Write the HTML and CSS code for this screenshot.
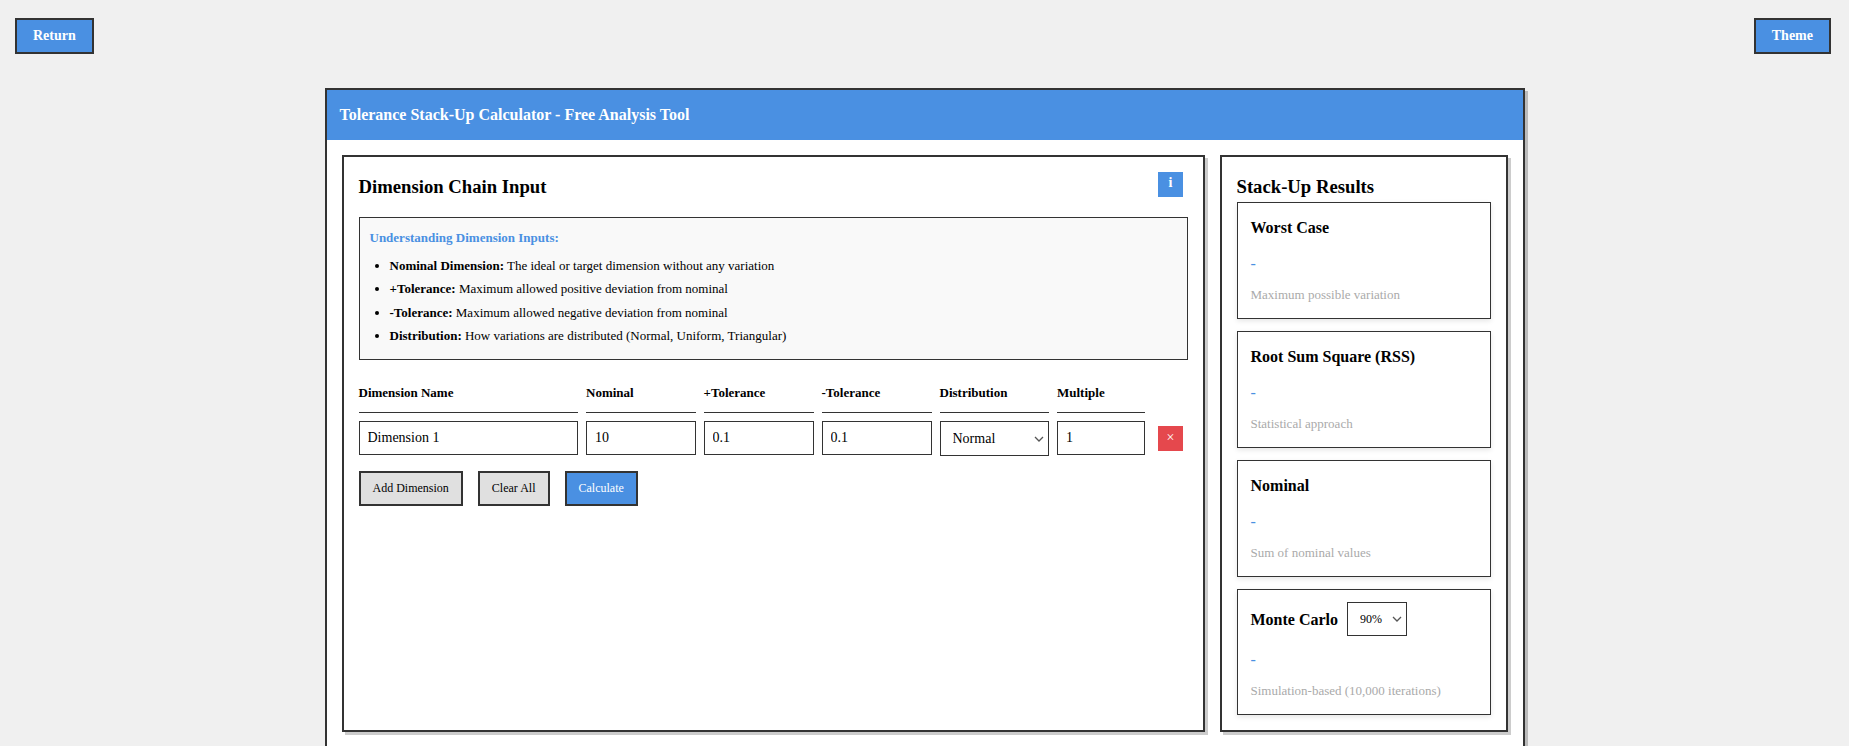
FILE: index.html
```html
<!DOCTYPE html>
<html lang="en">
<head>
<meta charset="utf-8">
<title>Tolerance Stack-Up Calculator</title>
<link rel="stylesheet" href="styles.css">
</head>
<body>
<div class="topbar">
  <button class="btn-top">Return</button>
  <button class="btn-top">Theme</button>
</div>
<main class="card">
  <header class="card-head"><h1>Tolerance Stack-Up Calculator - Free Analysis Tool</h1></header>
  <div class="card-body">
    <section class="panel">
      <div class="panel-head">
        <h2>Dimension Chain Input</h2>
        <button class="info-btn">i</button>
      </div>
      <div class="info-box">
        <h4>Understanding Dimension Inputs:</h4>
        <ul>
          <li><strong>Nominal Dimension:</strong> The ideal or target dimension without any variation</li>
          <li><strong>+Tolerance:</strong> Maximum allowed positive deviation from nominal</li>
          <li><strong>-Tolerance:</strong> Maximum allowed negative deviation from nominal</li>
          <li><strong>Distribution:</strong> How variations are distributed (Normal, Uniform, Triangular)</li>
        </ul>
      </div>
      <div class="dim-grid">
        <div class="th">Dimension Name</div>
        <div class="th">Nominal</div>
        <div class="th">+Tolerance</div>
        <div class="th">-Tolerance</div>
        <div class="th">Distribution</div>
        <div class="th">Multiple</div>
        <div class="th-empty"></div>
        <input class="field" type="text" value="Dimension 1">
        <input class="field" type="text" value="10">
        <input class="field" type="text" value="0.1">
        <input class="field" type="text" value="0.1">
        <select class="field-select"><option>Normal</option><option>Uniform</option><option>Triangular</option></select>
        <input class="field" type="text" value="1">
        <button class="del-btn">×</button>
      </div>
      <div class="actions">
        <button class="btn">Add Dimension</button>
        <button class="btn">Clear All</button>
        <button class="btn btn-primary">Calculate</button>
      </div>
    </section>
    <aside class="panel">
      <h2>Stack-Up Results</h2>
      <div class="results">
        <div class="result">
          <h3>Worst Case</h3>
          <div class="value">-</div>
          <div class="desc">Maximum possible variation</div>
        </div>
        <div class="result">
          <h3>Root Sum Square (RSS)</h3>
          <div class="value">-</div>
          <div class="desc">Statistical approach</div>
        </div>
        <div class="result">
          <h3>Nominal</h3>
          <div class="value">-</div>
          <div class="desc">Sum of nominal values</div>
        </div>
        <div class="result">
          <div class="mc-row">
            <h3>Monte Carlo</h3>
            <select class="mc-select"><option>90%</option><option>95%</option><option>99%</option></select>
          </div>
          <div class="value">-</div>
          <div class="desc">Simulation-based (10,000 iterations)</div>
        </div>
      </div>
    </aside>
  </div>
</main>
</body>
</html>
```
FILE: styles.css
```css
* { box-sizing: border-box; }
html, body { height: 746px; overflow: hidden; }
body {
  margin: 0;
  background: #f0f0f0;
  color: #000;
  font-family: "Liberation Serif", "Times New Roman", serif;
}
button, input, select { font-family: inherit; color: #000; }

.topbar {
  display: flex;
  justify-content: space-between;
  padding: 18px 18px 0 15px;
}
.btn-top {
  height: 36px;
  padding: 0 16px;
  background: #4a90e2;
  color: #fff;
  border: 2px solid #333;
  font-size: 14px;
  font-weight: bold;
}

.card {
  width: 1200px;
  margin: 34px auto 0;
  background: #fff;
  border: 2px solid #333;
  box-shadow: 3px 3px 0 #bbb;
  height: 800px;
}
.card-head {
  height: 50px;
  background: #4a90e2;
  display: flex;
  align-items: center;
  padding: 0 13px;
}
.card-head h1 { margin: 0; color: #fff; font-size: 16px; font-weight: bold; }
.card-body {
  display: grid;
  grid-template-columns: 863px 288px;
  gap: 15px;
  padding: 15px 15px;
  align-items: stretch;
}
.panel {
  border: 2px solid #333;
  box-shadow: 3px 3px 0 #ccc;
  padding: 15px;
  background: #fff;
}
.panel h2 { margin: 0; font-size: 18.7px; line-height: 30px; font-weight: bold; }
.panel-head { display: flex; justify-content: space-between; align-items: flex-start; margin-bottom: 15px; }
.info-btn {
  width: 25px;
  height: 25px;
  margin-right: 5px;
  padding: 0 0 3px 1px;
  border: 0;
  background: #4a90e2;
  color: #fff;
  font-size: 14px;
  font-weight: bold;
}

.info-box {
  border: 1px solid #333;
  background: #f9f9f9;
  padding: 12px 10px 11px;
  height: 143px;
}
.info-box h4 { margin: 0 0 8.5px; font-size: 13px; line-height: 15px; color: #4a90e2; font-weight: bold; }
.info-box ul { margin: 0; padding: 0 0 0 20px; }
.info-box li { font-size: 13px; line-height: 23.5px; }

.dim-grid {
  display: grid;
  grid-template-columns: 219.5px 109.5px 110px 110px 109.5px 88px 35px;
  column-gap: 8px;
  row-gap: 8px;
  margin-top: 17px;
  align-items: start;
}
.th {
  font-size: 13px;
  font-weight: bold;
  line-height: 16px;
  padding: 8px 0 11px;
  border-bottom: 1px solid #333;
}
.field {
  width: 100%;
  height: 34px;
  border: 1px solid #333;
  padding: 0 8px;
  font-size: 14px;
  background: #fff;
  border-radius: 0;
}
.field-select, .mc-select {
  appearance: none;
  -webkit-appearance: none;
  width: 100%;
  height: 35px;
  border: 1px solid #333;
  padding: 0 13px 1px 12px;
  font-size: 14px;
  background: #fff url("data:image/svg+xml,%3Csvg xmlns='http://www.w3.org/2000/svg' width='10' height='6' viewBox='0 0 10 6'%3E%3Cpath d='M1 1l4 4 4-4' fill='none' stroke='%23555' stroke-width='1.3'/%3E%3C/svg%3E") no-repeat right 4px center;
  border-radius: 0;
}
.del-btn {
  justify-self: center;
  align-self: center;
  width: 25px;
  height: 25px;
  padding: 0 0 2px;
  border: 0;
  background: #e5484d;
  color: #fff;
  font-size: 14px;
}

.actions { display: flex; gap: 15px; margin-top: 15px; }
.btn {
  height: 35px;
  padding: 0 12px;
  border: 2px solid #333;
  background: #e0e0e0;
  font-size: 12px;
}
.btn-primary { background: #4a90e2; color: #fff; }

.results { display: flex; flex-direction: column; gap: 12px; }
.result {
  border: 1px solid #333;
  padding: 12px 13px;
  box-shadow: 0 2px 5px rgba(0,0,0,.1);
  background: #fff;
}
.result h3 { margin: 0; font-size: 16px; line-height: 25px; font-weight: bold; }
.mc-row { display: flex; align-items: center; gap: 9px; }
.mc-select {
  width: 60px;
  height: 34px;
  font-size: 12px;
}
.value { color: #4a90e2; font-size: 16px; line-height: 40px; padding-top: 4px; }
.desc { color: #aaa; font-size: 13px; line-height: 22px; }
```
